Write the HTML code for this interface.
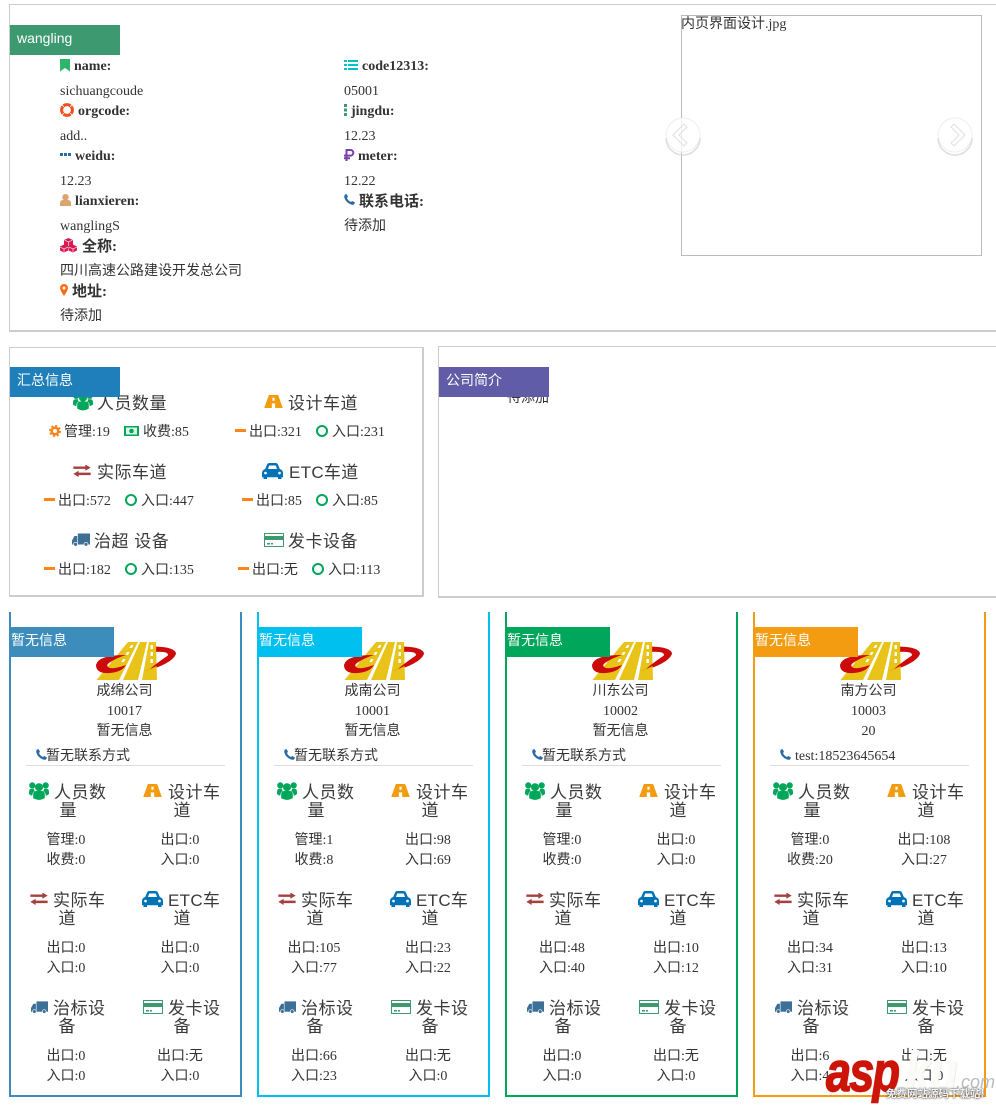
<!DOCTYPE html>
<html lang="zh"><head><meta charset="utf-8"><title>概览</title>
<style>
html,body{margin:0;padding:0;background:#fff}
body{position:relative;width:996px;height:1107px;overflow:hidden;font:14px/20px "Liberation Serif","Noto Sans CJK SC",serif;color:#333}
.t{position:absolute;white-space:nowrap;line-height:20px;transform:translateY(2px)}
.b{font-weight:bold}
.bz{font-weight:bold;font-size:15px}
.i{position:absolute;display:block;overflow:visible}
.h{position:absolute;white-space:nowrap;line-height:20px;font-family:"Liberation Sans","Noto Sans CJK SC",sans-serif;font-size:17px;letter-spacing:.5px;color:#3a3a3a}
.hc{position:absolute;width:100px;text-align:center;line-height:20px;font-family:"Liberation Sans","Noto Sans CJK SC",sans-serif;font-size:17px;color:#3a3a3a}
.v{position:absolute;width:100px;text-align:center;line-height:20px;white-space:nowrap}
.c{position:absolute;left:0;width:231px;text-align:center;line-height:20px;white-space:nowrap}
.p2 .t,.p2 .h{transform:translateY(6px)}
.card .t,.card .v,.card .c,.card .h,.card .hc{transform:translateY(4px)}
.bn{position:absolute;height:30px;line-height:27px;color:#fff;font-family:"Liberation Sans","Noto Sans CJK SC",sans-serif;font-size:14px;z-index:3}
.d{position:absolute;width:11px;height:3px;background:#ff851b}
.card{position:absolute;top:612px;width:229px;height:483px;border:2px solid;border-top:0}
.card>*{margin-left:-2px}
.line{position:absolute;left:17px;width:199px;height:1px;background:#ddd}
.wm{position:absolute;top:1044px;font:italic bold 56px/56px 'Liberation Sans',sans-serif;z-index:5;transform:scaleX(.8);transform-origin:left top}
</style></head>
<body>
<svg width="0" height="0" style="position:absolute">
<symbol id="users" viewBox="0 0 20 18"><g fill="#00a65a"><circle cx="10" cy="5.200" r="4"/><circle cx="3.300" cy="3.400" r="3.100"/><circle cx="16.700" cy="3.400" r="3.100"/><path d="M4.200 16V12.500Q4.200 9 7 9H13Q15.800 9 15.800 12.500V16Q10 19.800 4.200 16Z"/><path d="M0 10Q0 6.800 2.500 6.800H5Q4.800 8 5.800 9Q3.300 10 3.300 13.800Q1 13 0 12Z"/><path d="M20 10Q20 6.800 17.500 6.800H15Q15.200 8 14.200 9Q16.700 10 16.700 13.800Q19 13 20 12Z"/></g></symbol>
<symbol id="road" viewBox="0 0 20 14"><path fill="#f39c12" fill-rule="evenodd" d="M5 0H15L20 14H0ZM8.800 3V6.200H11.200V3ZM8.200 9V14H11.800V9Z"/></symbol>
<symbol id="ex" viewBox="0 0 18 12.500"><path fill="#a5403f" d="M0 1.500H12.500V-.5L18 2.750L12.500 6V4H0ZM18 8H5.500V6L0 9.250L5.500 12.500V10.500H18Z"/></symbol>
<symbol id="car" viewBox="0 0 21 16"><path fill="#0073b7" fill-rule="evenodd" d="M3.200 6L5.200 1.200Q5.800 0 7.500 0H13.500Q15.200 0 15.800 1.200L17.800 6Q21 7 21 10V14.200H19.500V16H16V14.200H5V16H1.500V14.200H0V10Q0 7 3.200 6ZM6 6H15L13.800 2.500H7.200ZM3.500 8.700A1.400 1.400 0 1 0 3.510 8.700ZM17.500 8.700A1.400 1.400 0 1 0 17.510 8.700Z"/></symbol>
<symbol id="truck" viewBox="0 0 18 13"><path fill="#3c7097" d="M5.800 0H18V11H5.800ZM5.200 2.500V11H0V7L2.500 2.500Z"/><circle cx="3.600" cy="10.800" r="2" fill="#3c7097" stroke="#fff" stroke-width=".7"/><circle cx="14" cy="10.800" r="2" fill="#3c7097" stroke="#fff" stroke-width=".7"/></symbol>
<symbol id="cardi" viewBox="0 0 20 14"><rect x=".5" y=".5" width="19" height="13" fill="#fff" stroke="#3d9970"/><rect x="1" y="3" width="18" height="4" fill="#3d9970"/><rect x="3" y="10" width="3" height="1.500" fill="#3d9970"/><rect x="7" y="10" width="2" height="1.500" fill="#3d9970"/></symbol>
<symbol id="phone" viewBox="0 0 11 11"><path fill="#2a6aa5" d="M2.500 0L4 2.800L3 4Q4 6.800 7 8L8.200 7L11 8.500L10 10.500Q8.500 11.300 6 10Q1.500 7.800 .3 3.500Q0 1.500 1 .500Z"/></symbol>
<symbol id="logo" viewBox="0 0 80 38"><path fill="#cc0a0a" d="M58 4.500Q80 5 80 12Q76 22 47 30Q70 20 72 13Q72 9 58 10Z"/><path fill="#e8c31a" d="M32 0H42L23 38H0.500ZM44 0H51L42 38H27ZM53 0H60L61 38H46Z"/><path fill="#fff" d="M35 3h2.500l-1.500 3h-2.500ZM31 10h2.500l-1.500 3h-2.500ZM27 17h2.500l-1.500 3h-2.500ZM54.500 3h2.500v4h-2.500ZM54.500 10h2.500v4h-2.500ZM54.500 17h2.500v4h-2.500Z"/><path fill="#cc0a0a" d="M54 27Q62 20 72 13.500Q74 12 76 13Q70 21 47 30Z"/><path fill="#cc0a0a" d="M30 13Q2 13 0 23Q0 32 14 31Q26 30 30 23Q19 27 14 26Q9 24 13 21Q20 16 30 13Z"/></symbol>
</svg>

<!-- Panel 1 -->
<div style="position:absolute;left:9px;top:4px;width:987px;height:325px;border:1px solid #ccc;border-right:0;border-bottom:2px solid #ccc"></div>
<div class="bn" style="left:10px;top:25px;width:103px;padding-left:7px;background:#3d9970">wangling</div>

<svg class="i" style="left:60px;top:59px" width="10" height="13" viewBox="0 0 10 13"><path fill="#2fb56b" d="M0 0H10V12.500L5 9L0 12.500Z"/></svg>
<span class="t b" style="left:74px;top:55px">name:</span>
<span class="t" style="left:60px;top:80px">sichuangcoude</span>
<svg class="i" style="left:344px;top:60px" width="14" height="10" viewBox="0 0 14 10"><path fill="#00c0c8" d="M0 0h3v2H0ZM4 0h10v2H4ZM0 4h3v2H0ZM4 4h10v2H4ZM0 8h3v2H0ZM4 8h10v2H4Z"/></svg>
<span class="t b" style="left:362px;top:55px">code12313:</span>
<span class="t" style="left:344px;top:80px">05001</span>

<svg class="i" style="left:60px;top:103px" width="14" height="14" viewBox="0 0 14 14"><circle cx="7" cy="7" r="5.400" fill="none" stroke="#f0501e" stroke-width="3"/><path stroke="#fff" stroke-width=".8" d="M3.800 3.800L2 2M10.200 3.800L12 2M3.800 10.200L2 12M10.200 10.200L12 12"/></svg>
<span class="t b" style="left:78px;top:100px">orgcode:</span>
<span class="t" style="left:60px;top:125px">add..</span>
<svg class="i" style="left:344px;top:104px" width="3" height="12" viewBox="0 0 3 12"><path fill="#3d9970" d="M0 0h3v3H0ZM0 4.500h3v3H0ZM0 9h3v3H0Z"/></svg>
<span class="t b" style="left:351px;top:100px">jingdu:</span>
<span class="t" style="left:344px;top:125px">12.23</span>

<svg class="i" style="left:60px;top:153px" width="11" height="3" viewBox="0 0 11 3"><path fill="#2a6aa5" d="M0 0h3v3H0ZM4 0h3v3H4ZM8 0h3v3H8Z"/></svg>
<span class="t b" style="left:75px;top:145px">weidu:</span>
<span class="t" style="left:60px;top:170px">12.23</span>
<svg class="i" style="left:344px;top:149px" width="10" height="12" viewBox="0 0 10 12"><path fill="none" stroke="#7a3fb0" stroke-width="2" d="M2.500 12V1H6.500A2.800 2.800 0 0 1 6.500 6.600H0M0 9.300H6"/></svg>
<span class="t b" style="left:358px;top:145px">meter:</span>
<span class="t" style="left:344px;top:170px">12.22</span>

<svg class="i" style="left:60px;top:194px" width="11" height="12" viewBox="0 0 11 12"><circle cx="5.500" cy="3.200" r="3.200" fill="#dba56f"/><path fill="#dba56f" d="M0 12V9Q0 6 3 6H8Q11 6 11 9V12Z"/></svg>
<span class="t b" style="left:75px;top:190px">lianxieren:</span>
<span class="t" style="left:60px;top:215px">wanglingS</span>
<svg class="i" style="left:344px;top:194px" width="11" height="11"><use href="#phone"/></svg>
<span class="t bz" style="left:359px;top:190px">联系电话:</span>
<span class="t" style="left:344px;top:215px">待添加</span>

<svg class="i" style="left:60px;top:238px" width="17" height="14" viewBox="0 0 17 14"><path fill="#d81b50" d="M8.500 0L13 2V7L8.500 9L4 7V2ZM4 6.500L8.300 8.500V12.500L4 14.500L0 12.500V8.500ZM13 6.500L17 8.500V12.500L13 14.500L8.700 12.500V8.500Z"/><path stroke="#fff" stroke-width=".6" fill="none" d="M4.500 2L8.500 4L12.500 2M8.500 4V8M0 9L4 11L8 9M4 11V14M9 9L13 11L17 9M13 11V14"/></svg>
<span class="t bz" style="left:82px;top:235px">全称:</span>
<span class="t" style="left:60px;top:260px">四川高速公路建设开发总公司</span>
<svg class="i" style="left:60px;top:284px" width="8" height="12" viewBox="0 0 8 12"><path fill="#ff6a13" fill-rule="evenodd" d="M4 0A4 4 0 0 1 8 4Q8 6 4 12Q0 6 0 4A4 4 0 0 1 4 0ZM4 2.400A1.600 1.600 0 1 0 4.010 2.400Z"/></svg>
<span class="t bz" style="left:72px;top:280px">地址:</span>
<span class="t" style="left:60px;top:305px">待添加</span>

<!-- Slider -->
<div style="position:absolute;left:681px;top:15px;width:299px;height:239px;border:1px solid #bbb"></div>
<span class="t" style="left:681px;top:13px">内页界面设计.jpg</span>
<svg class="i" style="left:664px;top:116px;z-index:2" width="38" height="40" viewBox="0 0 38 40"><circle cx="19" cy="19" r="17" fill="#fff" fill-opacity=".75" stroke="#eee"/><path d="M2 22A17 17 0 0 0 36 22" fill="none" stroke="#ddd" stroke-width="1.500"/><path fill="none" stroke="#e2e2e2" stroke-width="1.100" d="M20 8L9 19L20 30L23 27L15 19L23 11Z"/></svg>
<svg class="i" style="left:936px;top:116px;z-index:2" width="38" height="40" viewBox="0 0 38 40"><circle cx="19" cy="19" r="17" fill="#fff" fill-opacity=".75" stroke="#eee"/><path d="M2 22A17 17 0 0 0 36 22" fill="none" stroke="#ddd" stroke-width="1.500"/><path fill="none" stroke="#e2e2e2" stroke-width="1.100" d="M18 8L29 19L18 30L15 27L23 19L15 11Z"/></svg>

<!-- Panel 2 -->
<div class="p2">
<div style="position:absolute;left:9px;top:347px;width:412px;height:247px;border:1px solid #ccc;border-right:2px solid #ccc;border-bottom:2px solid #ccc"></div>
<div class="bn" style="left:10px;top:367px;width:103px;padding-left:7px;background:#1f7fbb">汇总信息</div>

<svg class="i" style="left:73px;top:392px" width="20" height="19"><use href="#users"/></svg>
<span class="h" style="left:97px;top:388px">人员数量</span>
<svg class="i" style="left:264px;top:395px" width="19" height="13"><use href="#road"/></svg>
<span class="h" style="left:288px;top:388px">设计车道</span>
<svg class="i" style="left:49px;top:425px" width="12" height="12" viewBox="0 0 12 12"><circle cx="6" cy="6" r="3.300" fill="none" stroke="#f7841d" stroke-width="2.600"/><circle cx="6" cy="6" r="5" fill="none" stroke="#f7841d" stroke-width="2" stroke-dasharray="2 1.930"/></svg>
<span class="t" style="left:64px;top:417px">管理:19</span>
<svg class="i" style="left:124px;top:426px" width="15" height="10" viewBox="0 0 15 10"><rect width="15" height="10" fill="#00a65a"/><rect x="2" y="1.500" width="11" height="7" fill="#dff3e8"/><circle cx="7.500" cy="5" r="2.300" fill="#00a65a"/></svg>
<span class="t" style="left:143px;top:417px">收费:85</span>
<i class="d" style="left:235px;top:429px"></i><span class="t" style="left:249px;top:417px">出口:321</span>
<svg class="i" style="left:316px;top:425px" width="12" height="12" viewBox="0 0 12 12"><circle cx="6" cy="6" r="5" fill="none" stroke="#00a65a" stroke-width="2"/></svg>
<span class="t" style="left:332px;top:417px">入口:231</span>

<svg class="i" style="left:73px;top:465px" width="18" height="12"><use href="#ex"/></svg>
<span class="h" style="left:97px;top:457px">实际车道</span>
<svg class="i" style="left:262px;top:463px" width="21" height="16"><use href="#car"/></svg>
<span class="h" style="left:289px;top:457px;letter-spacing:.3px">ETC车道</span>
<i class="d" style="left:44px;top:498px"></i><span class="t" style="left:58px;top:486px">出口:572</span>
<svg class="i" style="left:125px;top:494px" width="12" height="12" viewBox="0 0 12 12"><circle cx="6" cy="6" r="5" fill="none" stroke="#00a65a" stroke-width="2"/></svg>
<span class="t" style="left:141px;top:486px">入口:447</span>
<i class="d" style="left:242px;top:498px"></i><span class="t" style="left:256px;top:486px">出口:85</span>
<svg class="i" style="left:316px;top:494px" width="12" height="12" viewBox="0 0 12 12"><circle cx="6" cy="6" r="5" fill="none" stroke="#00a65a" stroke-width="2"/></svg>
<span class="t" style="left:332px;top:486px">入口:85</span>

<svg class="i" style="left:72px;top:533px" width="18" height="14"><use href="#truck"/></svg>
<span class="h" style="left:94px;top:526px">治超 设备</span>
<svg class="i" style="left:264px;top:533px" width="20" height="14"><use href="#cardi"/></svg>
<span class="h" style="left:288px;top:526px">发卡设备</span>
<i class="d" style="left:44px;top:567px"></i><span class="t" style="left:58px;top:555px">出口:182</span>
<svg class="i" style="left:125px;top:563px" width="12" height="12" viewBox="0 0 12 12"><circle cx="6" cy="6" r="5" fill="none" stroke="#00a65a" stroke-width="2"/></svg>
<span class="t" style="left:141px;top:555px">入口:135</span>
<i class="d" style="left:238px;top:567px"></i><span class="t" style="left:252px;top:555px">出口:无</span>
<svg class="i" style="left:312px;top:563px" width="12" height="12" viewBox="0 0 12 12"><circle cx="6" cy="6" r="5" fill="none" stroke="#00a65a" stroke-width="2"/></svg>
<span class="t" style="left:328px;top:555px">入口:113</span>

<!-- Panel 3 -->
<div style="position:absolute;left:438px;top:346px;width:558px;height:249px;border:1px solid #ccc;border-right:0;border-bottom:2px solid #ccc"></div>
<div class="bn" style="left:439px;top:367px;width:103px;padding-left:7px;background:#605ca8">公司简介</div>
<span class="t" style="left:507px;top:383px">待添加</span>
</div>

<!-- Card 1 -->
<div class="card" style="left:9px;border-color:#3c8dbc">
<div class="bn" style="left:2px;top:15px;width:103px;background:#3c8dbc">暂无信息</div>
<svg class="i" style="left:87px;top:30px" width="80" height="38"><use href="#logo"/></svg>
<span class="c" style="top:66px">成绵公司</span><span class="c" style="top:86px">10017</span><span class="c" style="top:106px">暂无信息</span>
<svg class="i" style="left:27px;top:137px" width="11" height="11"><use href="#phone"/></svg><span class="t" style="left:37px;top:131px">暂无联系方式</span>
<i class="line" style="top:153px"></i>
<svg class="i" style="left:20px;top:170px" width="20" height="18"><use href="#users"/></svg><span class="h" style="left:45px;top:167px">人员数</span><span class="hc" style="left:9px;top:185px">量</span>
<svg class="i" style="left:134px;top:172px" width="19" height="13"><use href="#road"/></svg><span class="h" style="left:159px;top:167px">设计车</span><span class="hc" style="left:123px;top:185px">道</span>
<span class="v" style="left:7px;top:215px">管理:0</span><span class="v" style="left:7px;top:235px">收费:0</span>
<span class="v" style="left:121px;top:215px">出口:0</span><span class="v" style="left:121px;top:235px">入口:0</span>
<svg class="i" style="left:21px;top:281px" width="18" height="12"><use href="#ex"/></svg><span class="h" style="left:44px;top:275px">实际车</span><span class="hc" style="left:8px;top:293px">道</span>
<svg class="i" style="left:133px;top:279px" width="21" height="16"><use href="#car"/></svg><span class="h" style="left:159px;top:275px;letter-spacing:.3px">ETC车</span><span class="hc" style="left:123px;top:293px">道</span>
<span class="v" style="left:7px;top:323px">出口:0</span><span class="v" style="left:7px;top:343px">入口:0</span>
<span class="v" style="left:121px;top:323px">出口:0</span><span class="v" style="left:121px;top:343px">入口:0</span>
<svg class="i" style="left:22px;top:389px" width="17" height="13"><use href="#truck"/></svg><span class="h" style="left:44px;top:383px">治标设</span><span class="hc" style="left:8px;top:401px">备</span>
<svg class="i" style="left:134px;top:388px" width="20" height="14"><use href="#cardi"/></svg><span class="h" style="left:159px;top:383px">发卡设</span><span class="hc" style="left:123px;top:401px">备</span>
<span class="v" style="left:7px;top:431px">出口:0</span><span class="v" style="left:7px;top:451px">入口:0</span>
<span class="v" style="left:121px;top:431px">出口:无</span><span class="v" style="left:121px;top:451px">入口:0</span>
</div>

<!-- Card 2 -->
<div class="card" style="left:257px;border-color:#00c0ef">
<div class="bn" style="left:2px;top:15px;width:103px;background:#00c0ef">暂无信息</div>
<svg class="i" style="left:87px;top:30px" width="80" height="38"><use href="#logo"/></svg>
<span class="c" style="top:66px">成南公司</span><span class="c" style="top:86px">10001</span><span class="c" style="top:106px">暂无信息</span>
<svg class="i" style="left:27px;top:137px" width="11" height="11"><use href="#phone"/></svg><span class="t" style="left:37px;top:131px">暂无联系方式</span>
<i class="line" style="top:153px"></i>
<svg class="i" style="left:20px;top:170px" width="20" height="18"><use href="#users"/></svg><span class="h" style="left:45px;top:167px">人员数</span><span class="hc" style="left:9px;top:185px">量</span>
<svg class="i" style="left:134px;top:172px" width="19" height="13"><use href="#road"/></svg><span class="h" style="left:159px;top:167px">设计车</span><span class="hc" style="left:123px;top:185px">道</span>
<span class="v" style="left:7px;top:215px">管理:1</span><span class="v" style="left:7px;top:235px">收费:8</span>
<span class="v" style="left:121px;top:215px">出口:98</span><span class="v" style="left:121px;top:235px">入口:69</span>
<svg class="i" style="left:21px;top:281px" width="18" height="12"><use href="#ex"/></svg><span class="h" style="left:44px;top:275px">实际车</span><span class="hc" style="left:8px;top:293px">道</span>
<svg class="i" style="left:133px;top:279px" width="21" height="16"><use href="#car"/></svg><span class="h" style="left:159px;top:275px;letter-spacing:.3px">ETC车</span><span class="hc" style="left:123px;top:293px">道</span>
<span class="v" style="left:7px;top:323px">出口:105</span><span class="v" style="left:7px;top:343px">入口:77</span>
<span class="v" style="left:121px;top:323px">出口:23</span><span class="v" style="left:121px;top:343px">入口:22</span>
<svg class="i" style="left:22px;top:389px" width="17" height="13"><use href="#truck"/></svg><span class="h" style="left:44px;top:383px">治标设</span><span class="hc" style="left:8px;top:401px">备</span>
<svg class="i" style="left:134px;top:388px" width="20" height="14"><use href="#cardi"/></svg><span class="h" style="left:159px;top:383px">发卡设</span><span class="hc" style="left:123px;top:401px">备</span>
<span class="v" style="left:7px;top:431px">出口:66</span><span class="v" style="left:7px;top:451px">入口:23</span>
<span class="v" style="left:121px;top:431px">出口:无</span><span class="v" style="left:121px;top:451px">入口:0</span>
</div>

<!-- Card 3 -->
<div class="card" style="left:505px;border-color:#00a65a">
<div class="bn" style="left:2px;top:15px;width:103px;background:#00a65a">暂无信息</div>
<svg class="i" style="left:87px;top:30px" width="80" height="38"><use href="#logo"/></svg>
<span class="c" style="top:66px">川东公司</span><span class="c" style="top:86px">10002</span><span class="c" style="top:106px">暂无信息</span>
<svg class="i" style="left:27px;top:137px" width="11" height="11"><use href="#phone"/></svg><span class="t" style="left:37px;top:131px">暂无联系方式</span>
<i class="line" style="top:153px"></i>
<svg class="i" style="left:20px;top:170px" width="20" height="18"><use href="#users"/></svg><span class="h" style="left:45px;top:167px">人员数</span><span class="hc" style="left:9px;top:185px">量</span>
<svg class="i" style="left:134px;top:172px" width="19" height="13"><use href="#road"/></svg><span class="h" style="left:159px;top:167px">设计车</span><span class="hc" style="left:123px;top:185px">道</span>
<span class="v" style="left:7px;top:215px">管理:0</span><span class="v" style="left:7px;top:235px">收费:0</span>
<span class="v" style="left:121px;top:215px">出口:0</span><span class="v" style="left:121px;top:235px">入口:0</span>
<svg class="i" style="left:21px;top:281px" width="18" height="12"><use href="#ex"/></svg><span class="h" style="left:44px;top:275px">实际车</span><span class="hc" style="left:8px;top:293px">道</span>
<svg class="i" style="left:133px;top:279px" width="21" height="16"><use href="#car"/></svg><span class="h" style="left:159px;top:275px;letter-spacing:.3px">ETC车</span><span class="hc" style="left:123px;top:293px">道</span>
<span class="v" style="left:7px;top:323px">出口:48</span><span class="v" style="left:7px;top:343px">入口:40</span>
<span class="v" style="left:121px;top:323px">出口:10</span><span class="v" style="left:121px;top:343px">入口:12</span>
<svg class="i" style="left:22px;top:389px" width="17" height="13"><use href="#truck"/></svg><span class="h" style="left:44px;top:383px">治标设</span><span class="hc" style="left:8px;top:401px">备</span>
<svg class="i" style="left:134px;top:388px" width="20" height="14"><use href="#cardi"/></svg><span class="h" style="left:159px;top:383px">发卡设</span><span class="hc" style="left:123px;top:401px">备</span>
<span class="v" style="left:7px;top:431px">出口:0</span><span class="v" style="left:7px;top:451px">入口:0</span>
<span class="v" style="left:121px;top:431px">出口:无</span><span class="v" style="left:121px;top:451px">入口:0</span>
</div>

<!-- Card 4 -->
<div class="card" style="left:753px;border-color:#f39c12">
<div class="bn" style="left:2px;top:15px;width:103px;background:#f39c12">暂无信息</div>
<svg class="i" style="left:87px;top:30px" width="80" height="38"><use href="#logo"/></svg>
<span class="c" style="top:66px">南方公司</span><span class="c" style="top:86px">10003</span><span class="c" style="top:106px">20</span>
<svg class="i" style="left:27px;top:137px" width="11" height="11"><use href="#phone"/></svg><span class="t" style="left:42px;top:131px">test:18523645654</span>
<i class="line" style="top:153px"></i>
<svg class="i" style="left:20px;top:170px" width="20" height="18"><use href="#users"/></svg><span class="h" style="left:45px;top:167px">人员数</span><span class="hc" style="left:9px;top:185px">量</span>
<svg class="i" style="left:134px;top:172px" width="19" height="13"><use href="#road"/></svg><span class="h" style="left:159px;top:167px">设计车</span><span class="hc" style="left:123px;top:185px">道</span>
<span class="v" style="left:7px;top:215px">管理:0</span><span class="v" style="left:7px;top:235px">收费:20</span>
<span class="v" style="left:121px;top:215px">出口:108</span><span class="v" style="left:121px;top:235px">入口:27</span>
<svg class="i" style="left:21px;top:281px" width="18" height="12"><use href="#ex"/></svg><span class="h" style="left:44px;top:275px">实际车</span><span class="hc" style="left:8px;top:293px">道</span>
<svg class="i" style="left:133px;top:279px" width="21" height="16"><use href="#car"/></svg><span class="h" style="left:159px;top:275px;letter-spacing:.3px">ETC车</span><span class="hc" style="left:123px;top:293px">道</span>
<span class="v" style="left:7px;top:323px">出口:34</span><span class="v" style="left:7px;top:343px">入口:31</span>
<span class="v" style="left:121px;top:323px">出口:13</span><span class="v" style="left:121px;top:343px">入口:10</span>
<svg class="i" style="left:22px;top:389px" width="17" height="13"><use href="#truck"/></svg><span class="h" style="left:44px;top:383px">治标设</span><span class="hc" style="left:8px;top:401px">备</span>
<svg class="i" style="left:134px;top:388px" width="20" height="14"><use href="#cardi"/></svg><span class="h" style="left:159px;top:383px">发卡设</span><span class="hc" style="left:123px;top:401px">备</span>
<span class="v" style="left:7px;top:431px">出口:6</span><span class="v" style="left:7px;top:451px">入口:4</span>
<span class="v" style="left:121px;top:431px">出口:无</span><span class="v" style="left:121px;top:451px">入口:0</span>
</div>

<!-- Watermark -->
<span class="wm" style="left:826px;color:#cc1508;-webkit-text-stroke:1.500px #cc1508;letter-spacing:-2px;text-shadow:1px 1px 1px rgba(0,0,0,.15)">asp</span>
<span class="wm" style="left:905px;color:#fbfbf8;-webkit-text-stroke:1px #fbfbf8;text-shadow:1px 1px 1px rgba(170,170,170,.35)">ku</span>
<span style="position:absolute;left:956px;top:1070px;font:italic 18px/24px 'Liberation Sans',sans-serif;color:#bbb;z-index:5">.com</span>
<span style="position:absolute;left:886px;top:1086px;font:bold 10.500px/16px 'Noto Sans CJK SC',sans-serif;color:#f4f4f4;z-index:6;white-space:nowrap;text-shadow:0 0 2px #444,0 0 1px #444">免费网站源码下载站!</span>
</body></html>
